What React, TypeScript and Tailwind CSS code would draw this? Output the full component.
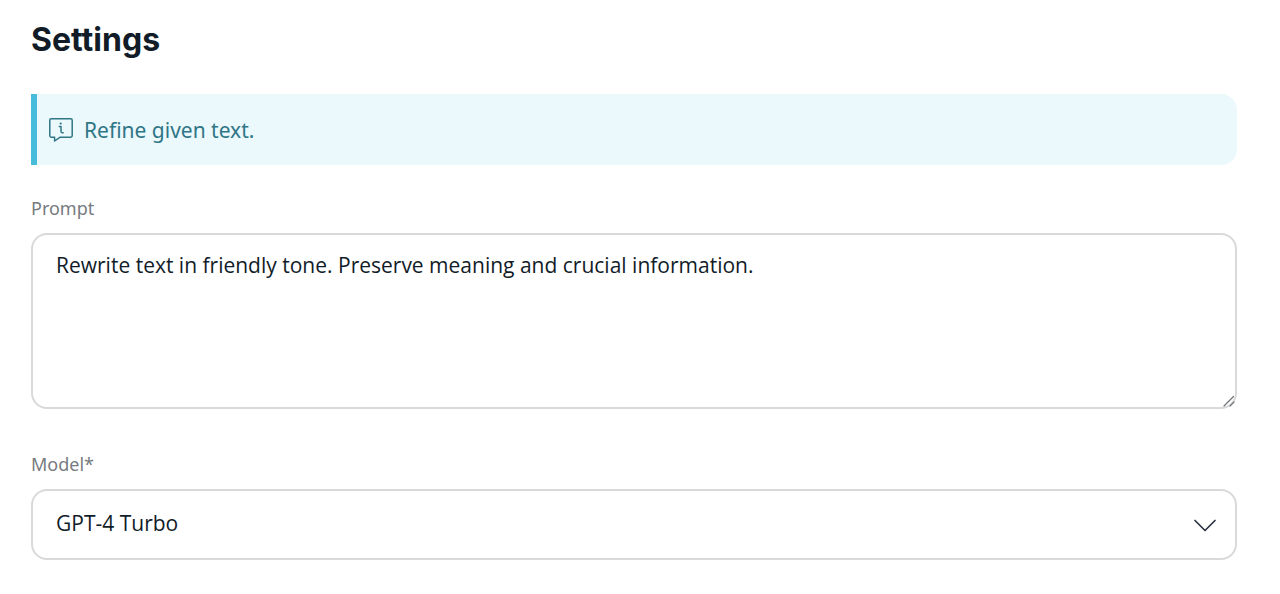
import { useState } from 'react';

const MODELS = ['GPT-4 Turbo', 'GPT-4', 'GPT-3.5 Turbo'];

export default function App() {
  return (
    <main className="pt-5 pr-[43px] pb-8 pl-[31px] bg-white font-['Noto_Sans',sans-serif] text-[#111c28]">
      <h1 className="font-['Inter',sans-serif] text-[32px] leading-10 font-bold">Settings</h1>

      <InfoBanner text="Refine given text." />

      <SettingsForm />
    </main>
  );
}

function InfoBanner({ text }: { text: string }) {
  return (
    <div className="mt-[34px] flex items-center gap-[11px] border-l-6 border-[#47bcdb] bg-[#ebf8fc] rounded-r-2xl pt-5 pb-[19px] pl-3 pr-5 text-[#2f7686]">
      <InfoIcon />
      <p className="text-[21px] leading-8">{text}</p>
    </div>
  );
}

function SettingsForm() {
  const [prompt, setPrompt] = useState(
    'Rewrite text in friendly tone. Preserve meaning and crucial information.'
  );
  const [model, setModel] = useState(MODELS[0]);

  return (
    <form>
      {/* Prompt */}
      <div className="mt-[31px]">
        <label htmlFor="prompt" className="block text-[18px] leading-6 text-[#777b80]">
          Prompt
        </label>
        <div className="mt-[13px] grid">
          <textarea
            id="prompt"
            value={prompt}
            onChange={(e) => setPrompt(e.target.value)}
            className="col-start-1 row-start-1 w-full h-44 resize-y rounded-2xl border-2 border-[#d9d9d9] bg-white px-[23px] py-[15px] font-['Open_Sans',sans-serif] text-[21px] leading-[30px] outline-none [&::-webkit-resizer]:bg-transparent"
          />
          <ResizeGrip />
        </div>
      </div>

      {/* Model */}
      <div className="mt-[43px]">
        <label htmlFor="model" className="block text-[18px] leading-6 text-[#777b80]">
          Model*
        </label>
        <div className="mt-[13px] grid items-center">
          <select
            id="model"
            required
            value={model}
            onChange={(e) => setModel(e.target.value)}
            className="col-start-1 row-start-1 w-full appearance-none rounded-2xl border-2 border-[#d9d9d9] bg-white px-[23px] pt-[15px] pb-[18px] font-['Open_Sans',sans-serif] text-[21px] leading-[34px] outline-none"
          >
            {MODELS.map((name) => (
              <option key={name}>{name}</option>
            ))}
          </select>
          <ChevronIcon />
        </div>
      </div>
    </form>
  );
}

function InfoIcon() {
  return (
    <svg
      viewBox="0 0 24 24"
      fill="none"
      stroke="currentColor"
      strokeWidth="1.5"
      strokeLinecap="round"
      strokeLinejoin="round"
      className="size-6 shrink-0"
      aria-hidden="true"
    >
      <path d="M2.2 .8H21.8Q23.2 .8 23.2 2.2V17.8Q23.2 19.2 21.8 19.2H11.2L5.6 23V19.2H2.2Q.8 19.2 .8 17.8V2.2Q.8 .8 2.2 .8Z" />
      <path d="M10.3 8.6H12V13.2Q12 14.8 13.4 14.8H14.2" />
      <circle cx="11.7" cy="5.5" r="1.1" fill="currentColor" stroke="none" />
    </svg>
  );
}

function ResizeGrip() {
  return (
    <svg
      viewBox="0 0 14 14"
      fill="none"
      stroke="#6f7276"
      strokeWidth="1.2"
      strokeLinecap="round"
      className="pointer-events-none col-start-1 row-start-1 size-3.5 self-end justify-self-end"
      aria-hidden="true"
    >
      <path d="M1 11L10.5 1.5M7 11L11 7" />
    </svg>
  );
}

function ChevronIcon() {
  return (
    <svg
      viewBox="0 0 24 24"
      fill="none"
      stroke="#2b3440"
      strokeWidth="1.7"
      strokeLinecap="round"
      strokeLinejoin="round"
      className="pointer-events-none col-start-1 row-start-1 mr-5 size-6 justify-self-end"
      aria-hidden="true"
    >
      <path d="M2 7.5L12 17.5L22 7.5" />
    </svg>
  );
}
